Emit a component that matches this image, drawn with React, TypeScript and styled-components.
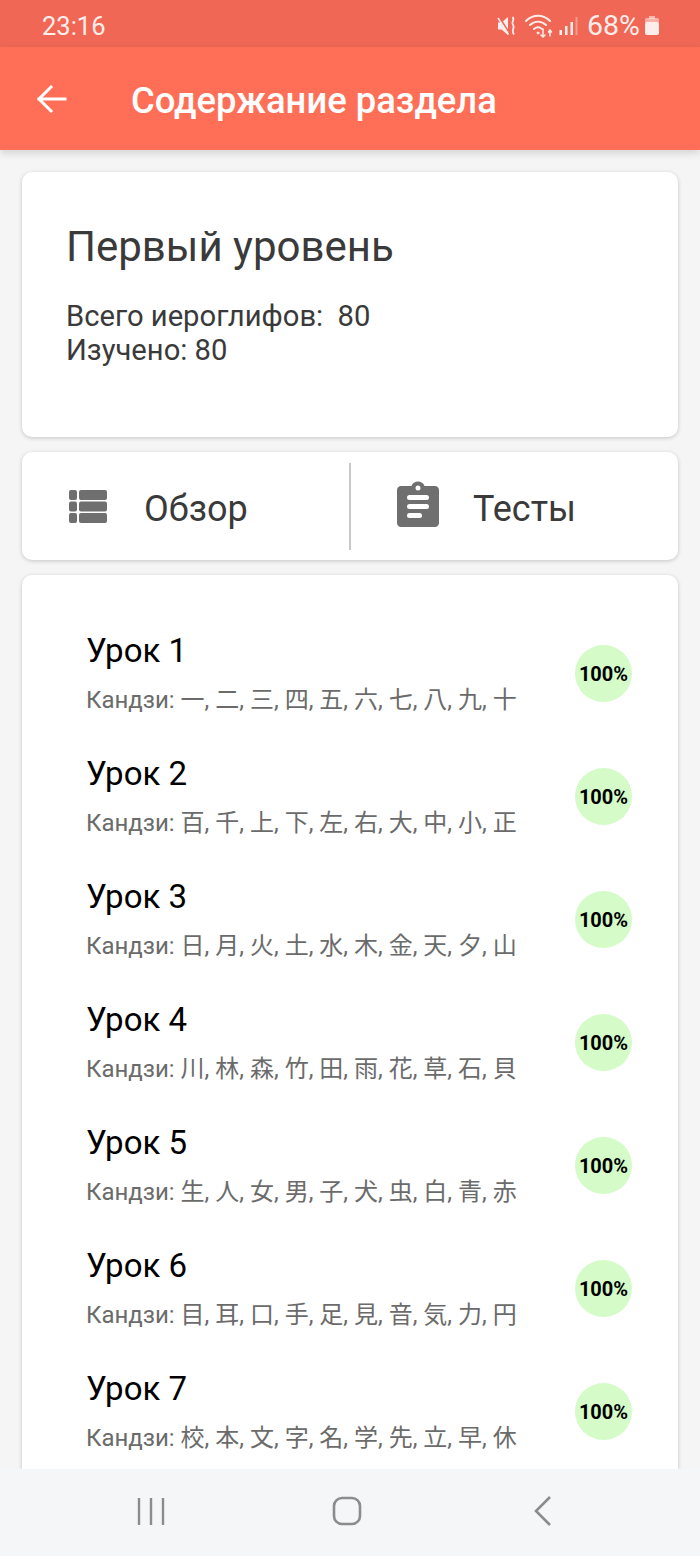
import React from "react";
import styled, { createGlobalStyle } from "styled-components";

const lessons = [
  "一, 二, 三, 四, 五, 六, 七, 八, 九, 十",
  "百, 千, 上, 下, 左, 右, 大, 中, 小, 正",
  "日, 月, 火, 土, 水, 木, 金, 天, 夕, 山",
  "川, 林, 森, 竹, 田, 雨, 花, 草, 石, 貝",
  "生, 人, 女, 男, 子, 犬, 虫, 白, 青, 赤",
  "目, 耳, 口, 手, 足, 見, 音, 気, 力, 円",
  "校, 本, 文, 字, 名, 学, 先, 立, 早, 休",
];

const App = () => {
  return (
    <Screen>
      <GlobalStyle />
      <StatusBar>
        <Clock>23:16</Clock>
        <StatusIcons>
          <svg width="20" height="20" viewBox="0 0 20 20" fill="none">
            <path d="M1 6.500h3.500L11 1v18l-6.500-5.500H1z" fill="#fdeeec" />
            <path d="M2.500 1.500L13 18" stroke="#f06755" strokeWidth="1.600" />
            <path d="M1 2l10.500 16.500" stroke="#fdeeec" strokeWidth="1.400" />
            <path d="M15.500 1c3 2.500-2 5 .5 8s-2.500 5 1 9.500" stroke="#fdeeec" strokeWidth="1.800" />
          </svg>
          <WifiIcon width="30" height="24" viewBox="0 0 30 24" fill="none" stroke="#fdeeec" strokeLinecap="round">
            <path d="M1 7c7-7 17-7 24 0" strokeWidth="2" />
            <path d="M5 11c5-4.500 11-4.500 16 0" strokeWidth="2" />
            <path d="M9 15c3-2.500 5-2.500 8 0" strokeWidth="2" />
            <circle cx="13" cy="19" r="1" fill="#fdeeec" />
            <path d="M18 15v8M16 21l2 2 2-2M25 22v-6M23.500 18l1.500-2 1.500 2" strokeWidth="1.500" />
          </WifiIcon>
          <SignalIcon width="19" height="20" viewBox="0 0 19 20" fill="#fdeeec">
            <rect x="0.500" y="14" width="2.500" height="5" />
            <rect x="6" y="10" width="2.500" height="9" />
            <rect x="11.500" y="6" width="2.500" height="13" />
            <rect x="16.500" y="1" width="2" height="18" opacity="0.4" />
          </SignalIcon>
          <Percent>68%</Percent>
          <svg width="14" height="19" viewBox="0 0 14 19">
            <rect x="4" y="0" width="6" height="3" fill="#fdeeec" opacity="0.6" />
            <rect x="0" y="2" width="14" height="5" rx="1.500" fill="#fdeeec" opacity="0.55" />
            <rect x="0" y="6" width="14" height="13" rx="2" fill="#fdeeec" />
          </svg>
        </StatusIcons>
      </StatusBar>

      <Header>
        <svg width="34" height="34" viewBox="0 0 34 34" fill="none" stroke="#fff" strokeWidth="3" strokeLinecap="square">
          <path d="M5 17h26M17 5L5 17l12 12" />
        </svg>
        <HeaderTitle>Содержание раздела</HeaderTitle>
      </Header>

      <Content>
        <SummaryCard>
          <LevelTitle>Первый уровень</LevelTitle>
          <LevelInfo>Всего иероглифов:&nbsp; 80</LevelInfo>
          <LevelInfo>Изучено: 80</LevelInfo>
        </SummaryCard>

        <ActionCard>
          <Action $iconGap={36}>
            <svg width="40" height="34" viewBox="0 0 40 34" fill="#6f6f6f">
              <rect x="1" y="1" width="8" height="10" rx="2" />
              <rect x="1" y="12.500" width="8" height="10" rx="2" />
              <rect x="1" y="24" width="8" height="10" rx="2" />
              <rect x="11" y="1" width="28" height="10" rx="2" />
              <rect x="11" y="12.500" width="28" height="10" rx="2" />
              <rect x="11" y="24" width="28" height="10" rx="2" />
            </svg>
            <ActionLabel>Обзор</ActionLabel>
          </Action>
          <Divider />
          <Action $iconGap={34}>
            <ClipboardIcon width="42" height="46" viewBox="0 0 42 46">
              <path
                fill="#6f6f6f"
                d="M4 5h10.500C15.500 2 18 0.500 21 0.500S26.500 2 27.500 5H38c2.200 0 4 1.800 4 4v33c0 2.200-1.800 4-4 4H4c-2.200 0-4-1.800-4-4V9c0-2.200 1.800-4 4-4z"
              />
              <circle cx="21" cy="7" r="2.500" fill="#fff" />
              <rect x="10" y="14" width="22" height="5" rx="2.500" fill="#fff" />
              <rect x="10" y="23" width="22" height="5" rx="2.500" fill="#fff" />
              <rect x="10" y="32" width="15" height="5" rx="2.500" fill="#fff" />
            </ClipboardIcon>
            <ActionLabel>Тесты</ActionLabel>
          </Action>
        </ActionCard>

        <LessonCard>
          {lessons.map((kanji, index) => (
            <Lesson key={kanji}>
              <LessonText>
                <LessonTitle>Урок {index + 1}</LessonTitle>
                <LessonKanji>Кандзи: {kanji}</LessonKanji>
              </LessonText>
              <Badge>100%</Badge>
            </Lesson>
          ))}
        </LessonCard>
      </Content>

      <NavBar>
        <svg width="30" height="30" viewBox="0 0 30 30" stroke="#8c8c8c" strokeWidth="2.400">
          <path d="M3 2v27M15 2v27M27 2v27" />
        </svg>
        <svg width="30" height="30" viewBox="0 0 30 30" fill="none" stroke="#8c8c8c" strokeWidth="2.600">
          <rect x="2" y="2" width="26" height="26" rx="8" />
        </svg>
        <svg width="24" height="32" viewBox="0 0 24 32" fill="none" stroke="#8c8c8c" strokeWidth="2.600">
          <path d="M22 2L8 16l14 14" />
        </svg>
      </NavBar>
    </Screen>
  );
};

export default App;

const GlobalStyle = createGlobalStyle`
  * {
    box-sizing: border-box;
  }
  html, body {
    margin: 0;
    padding: 0;
    background: #f5f5f5;
  }
`;

const Screen = styled.div`
  width: 700px;
  height: 1556px;
  display: flex;
  flex-direction: column;
  overflow: hidden;
  background: #f5f5f5;
  font-family: Roboto, "Noto Sans CJK JP", sans-serif;
`;

const StatusBar = styled.div`
  height: 47px;
  flex: none;
  display: flex;
  align-items: center;
  justify-content: space-between;
  padding: 4px 41px 0 42px;
  background: #f06755;
  color: #fdeeec;
`;

const Clock = styled.span`
  font-size: 25.5px;
`;

const StatusIcons = styled.div`
  display: flex;
  align-items: center;
`;

const WifiIcon = styled.svg`
  margin-left: 8px;
`;

const SignalIcon = styled.svg`
  margin-left: 4px;
`;

const Percent = styled.span`
  margin: 0 5px 0 9px;
  font-size: 28.5px;
`;

const Header = styled.header`
  height: 103px;
  flex: none;
  display: flex;
  align-items: center;
  gap: 63px;
  padding: 0 0 0 34px;
  background: #ff6f58;
  box-shadow: 0 3px 8px rgba(0, 0, 0, 0.14);
  position: relative;
`;

const HeaderTitle = styled.h1`
  margin: 4px 0 0;
  font-size: 36.4px;
  font-weight: 500;
  color: #fff;
`;

const Content = styled.main`
  flex: 1;
  min-height: 0;
  display: flex;
  flex-direction: column;
  gap: 15px;
  padding: 22px 22px 0;
`;

const Card = styled.section`
  background: #fff;
  border-radius: 10px;
  box-shadow: 0 1px 4px rgba(0, 0, 0, 0.2);
`;

const SummaryCard = styled(Card)`
  height: 265px;
  flex: none;
  padding: 48px 45px 0 44px;
  color: #3a3a3a;
`;

const LevelTitle = styled.h2`
  margin: 0 0 25px;
  font-size: 42px;
  line-height: 54px;
  font-weight: 400;
`;

const LevelInfo = styled.div`
  font-size: 29.2px;
  line-height: 34px;
`;

const ActionCard = styled(Card)`
  height: 108px;
  flex: none;
  display: flex;
  align-items: center;
`;

const Action = styled.div<{ $iconGap: number }>`
  flex: 1;
  display: flex;
  align-items: center;
  gap: ${(p) => p.$iconGap}px;
  padding-left: 46px;
`;

const ClipboardIcon = styled.svg`
  margin-bottom: 4px;
`;

const ActionLabel = styled.span`
  padding-top: 5px;
  font-size: 36px;
  color: #3a3a3a;
`;

const Divider = styled.div`
  width: 2px;
  height: 87px;
  flex: none;
  background: #c8c8c8;
`;

const LessonCard = styled(Card)`
  flex: 1;
  min-height: 0;
  overflow: hidden;
  padding: 37px 46px 0 64px;
  border-radius: 10px 10px 0 0;
`;

const Lesson = styled.div`
  height: 123px;
  display: flex;
  align-items: center;
  justify-content: space-between;
`;

const LessonText = styled.div`
  display: flex;
  flex-direction: column;
  gap: 14px;
  margin-bottom: 2px;
`;

const LessonTitle = styled.div`
  font-size: 33px;
  line-height: 40px;
  color: #000;
`;

const LessonKanji = styled.div`
  font-size: 24px;
  line-height: 30px;
  color: #6b6b6b;
  white-space: nowrap;
`;

const Badge = styled.div`
  width: 57px;
  height: 57px;
  display: flex;
  align-items: center;
  justify-content: center;
  border-radius: 50%;
  background: #d4fbc8;
  font-size: 20px;
  font-weight: 700;
  color: #000;
`;

const NavBar = styled.nav`
  height: 87px;
  flex: none;
  display: flex;
  align-items: center;
  gap: 166px;
  padding: 0 0 4px 136px;
  background: #f5f6f8;
`;
